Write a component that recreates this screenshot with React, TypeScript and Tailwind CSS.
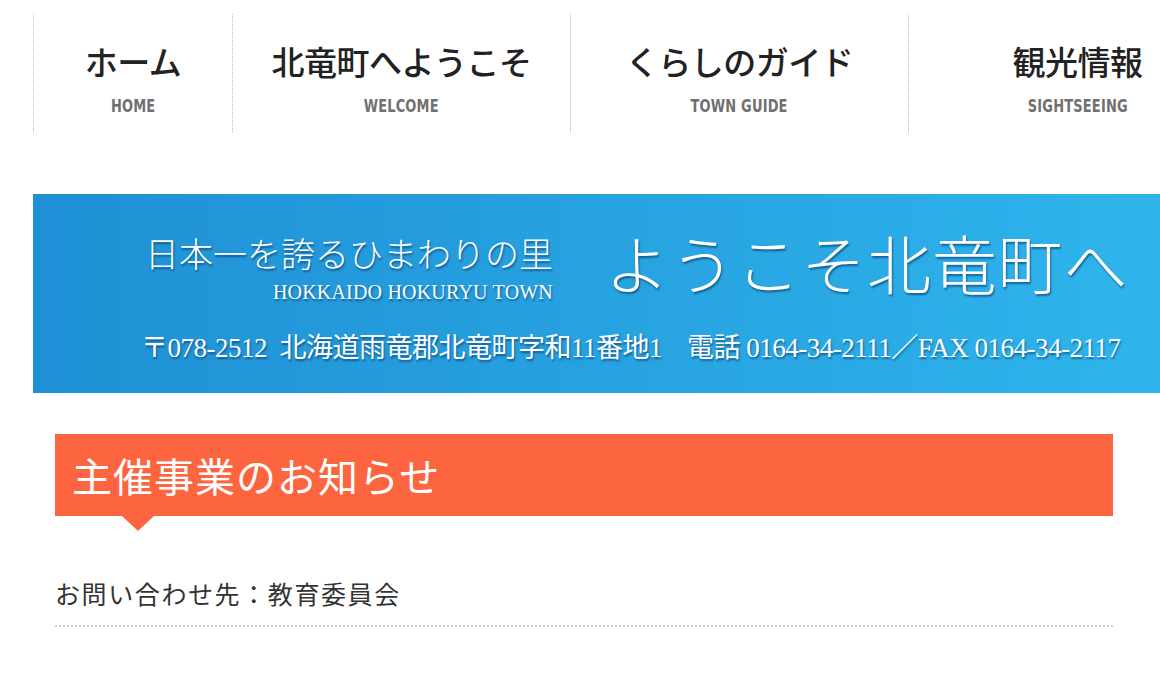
const NAV = [
  { ja: 'ホーム', en: 'HOME', w: 'w-[199px]' },
  { ja: '北竜町へようこそ', en: 'WELCOME', w: 'w-[338px]' },
  { ja: 'くらしのガイド', en: 'TOWN GUIDE', w: 'w-[338px]' },
  { ja: '観光情報', en: 'SIGHTSEEING', w: 'w-[338px]' },
]

const sans = '[font-family:"Noto_Sans_CJK_JP","Noto_Sans",sans-serif]'
const serif = '[font-family:"Liberation_Serif","Noto_Sans_CJK_JP",serif]'

function GlobalNav() {
  return (
    <nav className="flex pt-[14px] h-[133px]">
      {NAV.map((item) => (
        <div
          key={item.en}
          className={`${item.w} shrink-0 h-[119px] border-l border-dotted border-[#b8b8b8] flex flex-col items-center`}
        >
          <span className={`${sans} mt-[25px] text-[33px] leading-[44px] font-medium text-[#222] tracking-[-0.5px]`}>
            {item.ja}
          </span>
          <span className="mt-[13px] text-[17px] leading-[20px] text-[#707070] font-bold [font-family:'Liberation_Sans_Narrow','DejaVu_Sans_Condensed',sans-serif] scale-x-[0.85] tracking-[0.2px]">
            {item.en}
          </span>
        </div>
      ))}
    </nav>
  )
}

function Banner() {
  const shadow = '[text-shadow:1px_2px_2px_rgba(0,40,90,0.55)]'
  return (
    <div className="mt-[61px] w-[1140px] h-[199px] bg-gradient-to-r from-[#1f90d5] via-[#27a2e0] to-[#2fb5ec] text-white pl-[112px] flex flex-col">
      <div className="flex items-start pt-[42px]">
        <div className="flex flex-col items-end w-[414px]">
          <span className={`${serif} ${shadow} text-[34px] leading-[40px] font-light self-start`}>
            日本一を誇るひまわりの里
          </span>
          <span className={`${serif} ${shadow} text-[20px] leading-[22px] mt-[5px] mr-[6px] tracking-[0.2px]`}>
            HOKKAIDO HOKURYU TOWN
          </span>
        </div>
        <span className={`${serif} ${shadow} ml-[46px] -mt-[8px] text-[64px] leading-[80px] font-light tracking-[1.5px]`}>
          ようこそ北竜町へ
        </span>
      </div>
      <div className={`${serif} ${shadow} mt-[24px] -ml-[4px] text-[27px] leading-[32px] tracking-[-0.5px] whitespace-nowrap`}>
        〒078-2512&nbsp; 北海道雨竜郡北竜町字和11番地1&nbsp;&nbsp;&nbsp; 電話 0164-34-2111／FAX 0164-34-2117
      </div>
    </div>
  )
}

function Notice() {
  return (
    <section className="ml-[22px] w-[1058px] mt-[41px]">
      <div className="relative h-[82px] bg-[#fd6540] flex items-center pl-[17px]">
        <h2 className={`${sans} text-[40px] leading-[50px] text-white tracking-[1px]`}>主催事業のお知らせ</h2>
        <span className="absolute left-[67px] top-full w-0 h-0 border-l-[16px] border-r-[16px] border-t-[15px] border-l-transparent border-r-transparent border-t-[#fd6540]" />
      </div>
      <p className={`${sans} mt-[59px] text-[25px] leading-[36px] text-[#333] tracking-[1.6px] pb-[14px] border-b-2 border-dotted border-[#cfcfcf]`}>
        お問い合わせ先：教育委員会
      </p>
    </section>
  )
}

export default function App() {
  return (
    <div className="w-[1160px] h-[684px] overflow-hidden bg-white pl-[33px]">
      <GlobalNav />
      <Banner />
      <Notice />
    </div>
  )
}
